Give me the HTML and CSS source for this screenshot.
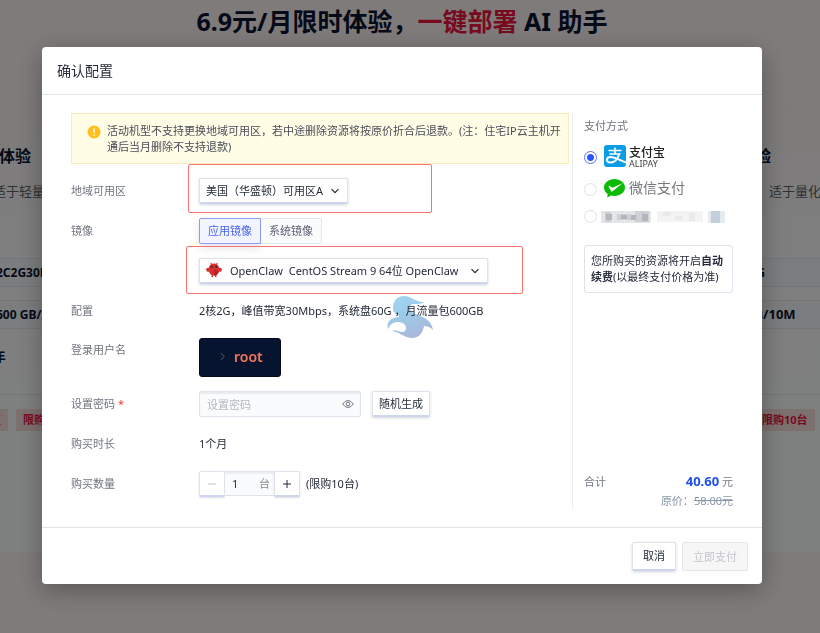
FILE: index.html
```html
<!doctype html>
<html lang="zh-CN">
  <head>
    <meta charset="UTF-8">
    <meta name="viewport" content="width=device-width, initial-scale=1.0">
    <title>确认配置</title>
    <link rel="stylesheet" href="styles.css">
  </head>
  <body>
    <!-- Promo page behind the dialog -->
    <main class="promo">
      <h1>6.9元/月限时体验，<em>一键部署</em> AI 助手</h1>
      <div class="plans">
        <section class="plan plan-left">
          <h2>限时体验</h2>
          <p class="plan-desc">适于轻量应用</p>
          <div class="spec">2C2G30M</div>
          <div class="spec">600 GB/月</div>
          <p class="plan-price">9元/年</p>
          <div class="tags"><span>专区</span><span>限购10台</span></div>
        </section>
        <section class="plan plan-right">
          <h2>体验</h2>
          <p class="plan-desc">适于量化交易</p>
          <div class="spec">4 G</div>
          <div class="spec">GB/10M</div>
          <p class="plan-price"></p>
          <div class="tags"><span>限购10台</span></div>
        </section>
      </div>
    </main>

    <div class="overlay">
      <div class="modal" role="dialog" aria-labelledby="modalTitle">
        <header class="modal-header" id="modalTitle">确认配置</header>

        <div class="modal-body">
          <form class="config" id="configForm">
            <div class="alert">
              <svg class="alert-icon" viewBox="0 0 14 14"><circle cx="7" cy="7" r="6.5" fill="#ffc01e"/><path d="M7 3.4v4.4M7 9.4v1.4" stroke="#fff" stroke-width="1.5"/></svg>
              <span>活动机型不支持更换地域可用区，若中途删除资源将按原价折合后退款。(注：住宅IP云主机开通后当月删除不支持退款)</span>
            </div>

            <div class="row">
              <label for="region">地域可用区</label>
              <div class="select mark mark-region">
                <select id="region"><option>美国（华盛顿）可用区A</option></select>
                <svg class="caret" viewBox="0 0 10 10"><path d="M1.5 3.2 5 6.7l3.5-3.5"/></svg>
              </div>
            </div>

            <div class="row">
              <span class="label">镜像</span>
              <div class="segment">
                <button type="button" class="active">应用镜像</button>
                <button type="button">系统镜像</button>
              </div>
            </div>

            <div class="row">
              <label for="image" class="empty" aria-label="镜像版本"></label>
              <div class="select select-image mark mark-image">
                <svg class="claw" viewBox="0 0 16 16">
                  <path d="M5.5 2.5 4.8.8M10.5 2.5 11.2.8" stroke="#c92a2a" fill="none"/>
                  <path d="M8 1.4c3 0 4.800 2 5.200 4.600C14.800 5.400 16 6.500 15.800 7.900 15.600 9.400 14.200 10 13 9.700 12.500 11.200 11.500 12.300 10.500 13V15H9V13.500H7V15H5.500V13C4.500 12.300 3.500 11.200 3 9.700 1.800 10 .4 9.400.2 7.900 0 6.500 1.200 5.400 2.800 6 3.200 3.400 5 1.400 8 1.400Z" fill="#d9302f"/>
                  <path d="M8 7.500 13 9.700 10.500 13 8 13.500Z" fill="#b71f25"/>
                  <circle cx="5.800" cy="4.800" r="1.100" fill="#33262f"/><circle cx="10.200" cy="4.800" r="1.100" fill="#33262f"/>
                </svg>
                <select id="image"><option>OpenClaw&nbsp; CentOS Stream 9 64位 OpenClaw</option></select>
                <svg class="caret" viewBox="0 0 10 10"><path d="M1.5 3.2 5 6.7l3.5-3.5"/></svg>
              </div>
            </div>

            <div class="row">
              <span class="label">配置</span>
              <div class="summary">
                <svg class="whale" viewBox="0 0 46 42">
                  <defs>
                    <linearGradient id="sea" x1="0" y1="0" x2="0.4" y2="1">
                      <stop offset="0" stop-color="#a2d7f2"/><stop offset="0.5" stop-color="#9ccbe8"/><stop offset="1" stop-color="#a9b9dc"/>
                    </linearGradient>
                  </defs>
                  <path fill="url(#sea)" d="M6 13C6 5 10 0 17 0c8 0 10 6 20 6-2 2-6 2-10 2-3 0-4 1-4 4 0 4 5 6 10 8 7 2 12 7 13 14-3-3-6-4-9-4-1 7-5 12-12 12-8 0-12-6-20-7 4-2 6 1 10 1 3 0 4-2 4-4 0-4-4-6-9-6-4 0-7 3-9 7-2-6 2-11 10-12 1 0 1-1 0-2C7 17 6 15 6 13Z"/>
                </svg>
                <span>2核2G，峰值带宽30Mbps，系统盘60G ，月流量包600GB</span>
              </div>
            </div>

            <div class="row row-top">
              <span class="label">登录用户名</span>
              <div class="username">
                <svg viewBox="0 0 6 10"><path d="M1 1l4 4-4 4"/></svg>
                <span>root</span>
              </div>
            </div>

            <div class="row">
              <label for="password">设置密码 <i>*</i></label>
              <div class="password">
                <input type="password" id="password" placeholder="设置密码">
                <svg class="eye" viewBox="0 0 12 10"><path d="M.7 5Q3 1.500 6 1.500T11.300 5Q9 8.500 6 8.500T.7 5Z"/><circle cx="6" cy="5" r="1.800"/></svg>
              </div>
              <button type="button" class="btn btn-random">随机生成</button>
            </div>

            <div class="row">
              <span class="label">购买时长</span>
              <span>1个月</span>
            </div>

            <div class="row">
              <label for="count">购买数量</label>
              <div class="stepper">
                <button type="button" id="minus" aria-label="减少" disabled><svg viewBox="0 0 10 10"><path d="M1 5h8"/></svg></button>
                <div class="count"><input type="text" id="count" value="1"><span>台</span></div>
                <button type="button" id="plus" aria-label="增加"><svg viewBox="0 0 10 10"><path d="M1 5h8M5 1v8"/></svg></button>
              </div>
              <span class="limit">(限购10台)</span>
            </div>
          </form>

          <aside class="payment">
            <div class="payment-title">支付方式</div>
            <label class="pay pay-alipay">
              <input type="radio" name="pay" checked>
              <svg class="alipay-logo" viewBox="0 0 22 22">
                <rect width="22" height="22" rx="3" fill="#0a9de6"/>
                <g fill="none" stroke="#fff" stroke-width="1.700">
                  <path d="M4.500 5.500h13M11 2.500v6.500M5.500 9h11"/>
                  <path d="M15.200 9C14 13 11 17.500 6.500 17.500c-5 0-4.500-5.500 0-5.500 5 0 9 3.500 15.500 5.500" stroke-width="2"/>
                </g>
              </svg>
              <span class="alipay-name"><b>支付宝</b><small>ALIPAY</small></span>
            </label>
            <label class="pay pay-wechat">
              <input type="radio" name="pay">
              <svg class="wechat-logo" viewBox="0 0 21 19">
                <path fill="#0abb07" d="M10.500 0C4.700 0 0 3.700 0 8.500c0 2.700 1.500 5 3.700 6.500L3.200 18.500 7 16.600c1.100.3 2.300.4 3.500.4C16.300 17 21 13.300 21 8.500S16.300 0 10.500 0Z"/>
                <path fill="#fff" d="M4.500 7.200c.5-.5 1-.4 1.500 0l2.300 1.500L18.500 4.200 8.600 12.300c-.6.5-1.200.3-1.600-.3Z"/>
              </svg>
              <span class="wechat-name">微信支付</span>
            </label>
            <label class="pay pay-balance" aria-label="余额">
              <input type="radio" name="pay">
              <!-- account name is masked -->
              <svg class="mosaic" viewBox="0 0 124 13">
                <path d="M0 1h50v12H0z" fill="#e4e5e7"/>
                <path d="M4 2h6v10H4zM16 4h14v6H16zM34 1h14v11H34z" fill="#cdd0d4"/>
                <path d="M5 4h6v6H5zM20 5h6v4h-6zM30 5h5v5h-5zM41 4h6v7h-6z" fill="#b3b6bb"/>
                <path d="M56 1h46v11H56z" fill="#f3f3f4"/><path d="M62 2h8v4h-8zM74 6h8v4h-8zM88 3h6v8h-6z" fill="#e9eaec"/>
                <path d="M107 1h17v12h-17z" fill="#e6ebf0"/><path d="M110 1h9v12h-9z" fill="#c3cfdb"/>
              </svg>
            </label>
            <div class="renew">您所购买的资源将开启<b>自动续费</b>(以最终支付价格为准)</div>
            <div class="total">
              <span>合计</span>
              <div class="total-price"><strong>40.60</strong> 元</div>
            </div>
            <div class="origin">原价：<del>58.00元</del></div>
          </aside>
        </div>

        <footer class="modal-footer">
          <button type="button" class="btn btn-cancel">取消</button>
          <button type="submit" form="configForm" class="btn btn-pay" disabled>立即支付</button>
        </footer>
      </div>
    </div>
  </body>
</html>
```
FILE: styles.css
```css
* {
  box-sizing: border-box;
}
body {
  margin: 0;
  min-height: 100vh;
  overflow: hidden;
  background: #fcf6f5;
  color: #252b3a;
  font-family: "Noto Sans", "Noto Sans CJK SC", sans-serif;
  font-size: 11px;
  line-height: 16px;
}
button, input, select {
  margin: 0;
  font: inherit;
  color: inherit;
}
button {
  cursor: pointer;
}

/* promo page */
.promo h1 {
  margin: 0;
  padding: 3px 16px 64px 0;
  color: #0a1330;
  font-size: 25px;
  line-height: 36px;
  font-weight: 700;
  text-align: center;
  white-space: nowrap;
}
.promo h1 em {
  color: #f01440;
  font-style: normal;
}
.plans {
  display: flex;
  justify-content: space-between;
  height: 449px;
  overflow: hidden;
  background: linear-gradient(#fdf5f4, #fdfdfd 130px, #fdffff);
}
.plan {
  width: 120px;
  padding-top: 41px;
  white-space: nowrap;
  color: #0a1330;
}
.plan-left {
  margin-left: -33px;
}
.plan-right {
  width: 81px;
}
.plan h2 {
  margin: 0;
  font-size: 16px;
  line-height: 24px;
}
.plan-desc {
  margin: 11px 0 55px;
  padding-left: 26px;
  color: #5f6268;
  font-size: 13px;
  line-height: 24px;
}
.spec {
  height: 29px;
  margin-bottom: 13px;
  padding-left: 29px;
  border: solid #e6eaf0;
  border-width: 1px 0;
  background: #f6fafc;
  font-size: 12px;
  font-weight: 700;
  line-height: 27px;
}
.plan-price {
  height: 24px;
  margin: 15px 0 26px;
  font-size: 13px;
  line-height: 24px;
  font-weight: 700;
}
.tags {
  display: flex;
  gap: 8px;
  padding-top: 14px;
  border-top: 1px solid #e6eaf0;
}
.tags span {
  padding: 3px 7px;
  background: #fbe3e1;
  color: #f01440;
  font-weight: 700;
}
.plan-left .tags {
  padding-left: 5px;
}
.plan-right .plan-desc {
  padding-left: 30px;
}
.plan-right .spec {
  padding-left: 6px;
  font-size: 13px;
}
.plan-right .tags {
  padding-left: 16px;
}

/* dialog */
.overlay {
  position: fixed;
  inset: 0;
  display: flex;
  align-items: flex-start;
  justify-content: center;
  padding: 47px 16px 0 0;
  background: rgba(0, 0, 0, 0.5);
}
.modal {
  width: 90%;
  max-width: 720px;
  border-radius: 4px;
  background: #fff;
  box-shadow: 0 6px 26px rgba(0, 0, 0, 0.3);
}
.modal-header {
  padding: 12px 15px 11px;
  border-bottom: 1px solid #dfe5ec;
  font-size: 14px;
  line-height: 24px;
}
.modal-body {
  display: flex;
  gap: 3px;
  padding: 18px 29px;
}
.config {
  display: flex;
  flex: 1;
  flex-direction: column;
  gap: 14px;
  padding-bottom: 12px;
}
.alert {
  display: flex;
  gap: 6px;
  padding: 9px 6px 8px 15px;
  border: 1px solid #fdebba;
  background: #fffde6;
  color: #4a4d58;
}
.alert-icon {
  flex: none;
  width: 14px;
  height: 14px;
  margin-top: 2px;
}
.row {
  display: flex;
  align-items: center;
  min-height: 26px;
}
.row-top {
  align-items: flex-start;
}
.row > :first-child {
  width: 128px;
  color: #71757f;
}
.row-top > :first-child {
  margin-top: 4px;
}
.row i {
  color: #f04134;
  font-style: normal;
}
.select {
  position: relative;
  width: 149px;
}
.select-image {
  width: 289px;
}
select {
  width: 100%;
  height: 26px;
  padding: 0 20px 0 6px;
  border: 1px solid #dfe1eb;
  border-bottom: 2px solid #cdd5f0;
  border-radius: 2px;
  background: #fff;
  box-shadow: 0 1px 3px rgba(37, 43, 58, 0.2);
  appearance: none;
}
.select-image select {
  padding-left: 30px;
}
.caret {
  position: absolute;
  top: 8px;
  right: 8px;
  width: 10px;
  height: 10px;
  fill: none;
  stroke: #252b3a;
  stroke-width: 1.2;
}
.claw {
  position: absolute;
  top: 4px;
  left: 7px;
  width: 16px;
  height: 16px;
}
/* red frame round the fields to check */
.mark::after {
  content: "";
  position: absolute;
  border: 1px solid #f8736f;
  border-radius: 2px;
  pointer-events: none;
}
.mark-region::after {
  inset: -14px -84px -9px -11px;
}
.mark-image::after {
  inset: -12px -35px -10px -13px;
}
.segment {
  display: flex;
}
.segment button {
  height: 26px;
  padding: 0 8px;
  border: 1px solid #e3e6ee;
  border-left: 0;
  border-radius: 0 2px 2px 0;
  background: #fafbfd;
  color: #5c6173;
}
.segment .active {
  border: 1px solid #8d9cf3;
  border-radius: 2px 0 0 2px;
  background: #f2f5ff;
  box-shadow: 0 4px 8px rgba(37, 43, 58, 0.12);
  color: #4a63f0;
}
.summary {
  position: relative;
}
.summary span {
  position: relative;
}
.whale {
  position: absolute;
  top: -7px;
  left: 188px;
  width: 46px;
  height: 42px;
}
.username {
  display: flex;
  align-items: center;
  gap: 9px;
  height: 39px;
  padding: 0 17px 2px 20px;
  border: 1px solid #020a1e;
  border-radius: 3px;
  background: #07142f;
  color: #f4785b;
  font-size: 14px;
  font-weight: 600;
}
.username svg {
  width: 5px;
  height: 9px;
  fill: none;
  stroke: #6d7480;
}
.password {
  position: relative;
  width: 162px;
  margin-right: 11px;
}
.password input {
  display: block;
  width: 100%;
  height: 26px;
  padding: 0 26px 0 7px;
  border: 1px solid #dfe1eb;
  border-radius: 2px;
  background: #fafbfc;
  box-shadow: inset 0 2px 1px #e8eaee;
}
.password input::placeholder {
  color: #b6b9c0;
}
.eye {
  position: absolute;
  top: 8px;
  right: 7px;
  width: 12px;
  height: 10px;
  fill: none;
  stroke: #71757f;
}
.btn {
  height: 29px;
  padding: 0 10px;
  border: 1px solid #dfe1eb;
  border-bottom: 2px solid #cdd5f0;
  border-radius: 2px;
  background: #fff;
  box-shadow: 0 1px 3px rgba(37, 43, 58, 0.2);
}
.btn-random {
  height: 26px;
  padding: 0 6px;
}
.stepper {
  display: flex;
}
.stepper button {
  width: 26px;
  height: 26px;
  padding: 0;
  border: 1px solid #dfe1eb;
  border-bottom: 2px solid #cdd5f0;
  border-radius: 2px;
  background: #fff;
  box-shadow: 0 1px 2px rgba(37, 43, 58, 0.15);
}
.stepper svg {
  display: block;
  width: 10px;
  height: 10px;
  margin: auto;
  stroke: #252b3a;
}
.stepper button:disabled svg {
  stroke: #c3c5ca;
}
.count {
  display: flex;
  align-items: center;
  width: 49px;
  height: 25px;
  padding: 0 4px 0 7px;
  border: solid #dfe1eb;
  border-width: 1px 0;
  background: #fafbfc;
  box-shadow: inset 0 2px 1px #eceef2;
  color: #8a8e99;
}
.count input {
  flex: 1;
  width: 0;
  padding: 0;
  border: 0;
  background: none;
  color: #252b3a;
}
.limit {
  margin-left: 6px;
}

/* payment column */
.payment {
  display: flex;
  flex-direction: column;
  width: 161px;
  padding: 5px 0 0 11px;
  border-left: 1px solid #eaebf3;
}
.payment-title {
  margin-bottom: 7px;
  color: #71757f;
}
.pay {
  display: flex;
  align-items: center;
  height: 32px;
}
.pay input {
  width: 13px;
  height: 13px;
  margin: 0 7px 0 0;
  border: 1px solid #dfe1eb;
  border-radius: 50%;
  background: #fff;
  appearance: none;
}
.pay input:checked {
  border-color: #5a73f5;
  background: radial-gradient(circle, #2d55f5 3px, #fff 4px);
}
.alipay-logo {
  width: 22px;
  height: 22px;
  margin: 0 3px 2px 0;
}
.alipay-name b {
  display: block;
  color: #222;
  font-size: 12px;
  font-weight: 500;
  line-height: 12px;
}
.alipay-name small {
  display: block;
  color: #444;
  font-size: 9px;
  line-height: 9px;
}
.wechat-logo {
  width: 21px;
  height: 19px;
  margin: 0 4px 2px 0;
}
.wechat-name {
  padding-bottom: 2px;
  color: #76787c;
  font-size: 14px;
}
.pay-balance {
  height: 22px;
}
.mosaic {
  width: 124px;
  height: 13px;
  margin-left: -3px;
}
.renew {
  margin-top: 18px;
  padding: 7px 6px;
  border: 1px solid #dfe1eb;
  border-radius: 3px;
}
.total {
  display: flex;
  align-items: center;
  justify-content: space-between;
  margin-top: auto;
  color: #71757f;
}
.total-price strong {
  color: #2150f0;
  font-size: 13px;
}
.origin {
  margin-top: 3px;
  color: #8a97a8;
  text-align: right;
}

.modal-footer {
  display: flex;
  justify-content: flex-end;
  gap: 6px;
  padding: 14px 14px 13px;
  border-top: 1px solid #e1e4ea;
}
.btn-pay:disabled {
  border: 1px solid #e6e7ea;
  background: #f6f6f7;
  box-shadow: none;
  color: #c3c5ca;
  cursor: default;
}
```
